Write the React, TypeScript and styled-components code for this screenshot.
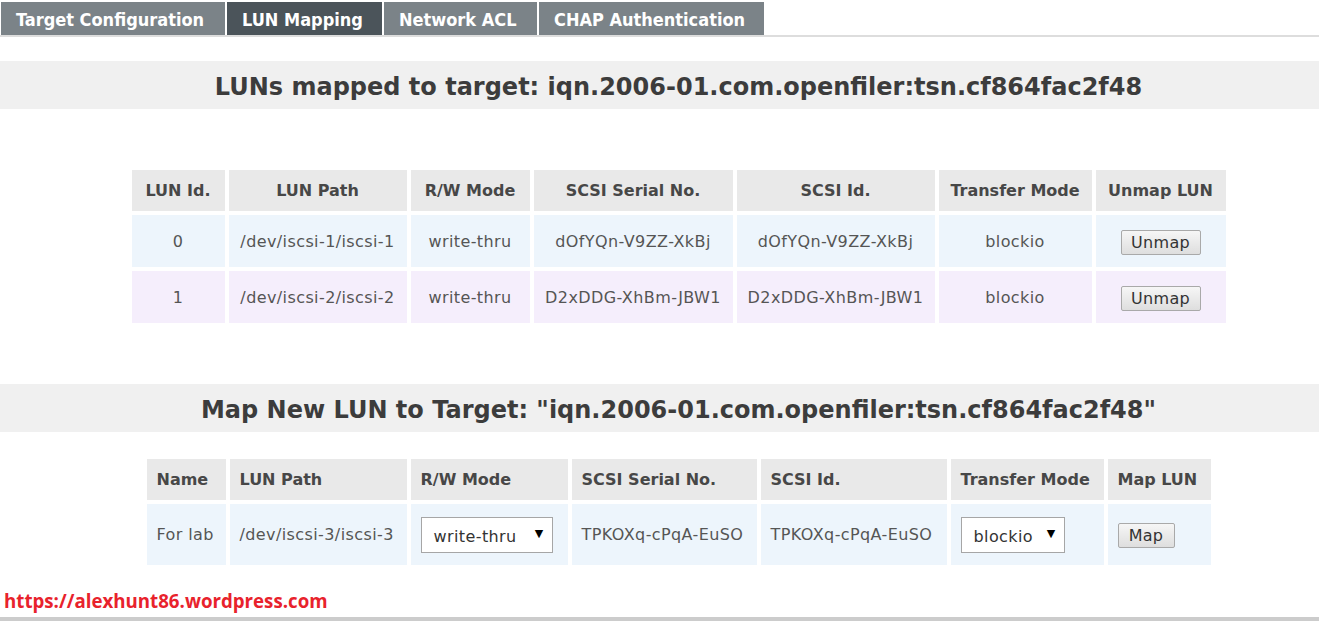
import React from 'react'
import styled, { createGlobalStyle } from 'styled-components'

const GlobalStyle = createGlobalStyle`
	html, body {
		margin: 0;
		padding: 0;
		background: #ffffff;
		font-family: 'DejaVu Sans', Verdana, sans-serif;
	}
`

const Page = styled.div`
	width: 1319px;
	height: 621px;
	overflow: hidden;
	display: flex;
	flex-direction: column;
`

const TabBar = styled.nav`
	display: flex;
	gap: 2px;
	padding: 2px 0 0 1px;
	border-bottom: 2px solid #dddddd;
`

const Tab = styled.a<{ $active?: boolean; $w: number }>`
	display: flex;
	align-items: center;
	box-sizing: border-box;
	width: ${({ $w }) => $w}px;
	height: 33px;
	padding: 1px 0 0 15px;
	background: ${({ $active }) => ($active ? '#4b545a' : '#7b8388')};
	color: #ffffff;
	font-family: 'DejaVu Sans Condensed', 'DejaVu Sans', sans-serif;
	font-weight: bold;
	font-size: 18px;
	text-decoration: none;
	white-space: nowrap;
`

const HeadingBar = styled.h2<{ $top: number }>`
	margin: ${({ $top }) => $top}px 0 0;
	height: 48px;
	box-sizing: border-box;
	padding: 4px 0 0 38px;
	display: flex;
	align-items: center;
	justify-content: center;
	background: #f0f0f0;
	color: #3c3c3c;
	font-family: 'DejaVu Sans', Verdana, sans-serif;
	font-weight: bold;
	font-size: 24px;
`

const TableWrap = styled.div<{ $top: number }>`
	margin-top: ${({ $top }) => $top}px;
	padding-left: 38px;
	display: flex;
	justify-content: center;
`

const Table = styled.table`
	border-collapse: separate;
	border-spacing: 4px;
	margin: -4px;
	font-family: 'DejaVu Sans', Tahoma, sans-serif;
	font-size: 16px;
	color: #555555;
`

const Th = styled.th<{ $w: number; $left?: boolean }>`
	width: ${({ $w }) => $w}px;
	height: 41px;
	box-sizing: border-box;
	padding: 0 10px;
	background: #e9e9e9;
	color: #474747;
	font-weight: bold;
	text-align: ${({ $left }) => ($left ? 'left' : 'center')};
	white-space: nowrap;
`

const Td = styled.td<{ $bg: string; $h: number; $left?: boolean }>`
	height: ${({ $h }) => $h}px;
	box-sizing: border-box;
	padding: 0 10px;
	background: ${({ $bg }) => $bg};
	text-align: ${({ $left }) => ($left ? 'left' : 'center')};
	letter-spacing: 0.4px;
	white-space: nowrap;
`

const Button = styled.button<{ $w: number }>`
	width: ${({ $w }) => $w}px;
	height: 25px;
	padding: 0;
	margin-top: 2px;
	border: 1px solid #a9a9a9;
	border-radius: 2px;
	background: linear-gradient(#f6f6f6, #dedede);
	color: #333333;
	font-family: 'DejaVu Sans', Tahoma, sans-serif;
	font-size: 16px;
	letter-spacing: 0.3px;
	cursor: pointer;
`

const SelectBox = styled.div<{ $w: number }>`
	width: ${({ $w }) => $w}px;
	height: 36px;
	box-sizing: border-box;
	display: flex;
	align-items: center;
	justify-content: space-between;
	padding: 3px 8px 0 12px;
	border: 1px solid #a6a6a6;
	background: #ffffff;
	color: #333333;
	font-size: 16px;
`

const Arrow = styled.span`
	font-size: 11px;
	color: #000000;
	margin-top: -6px;
`

const Footer = styled.footer`
	margin-top: auto;
	display: flex;
	flex-direction: column;
`

const Credit = styled.a`
	padding: 0 0 4px 4px;
	color: #e8222c;
	font-family: 'Open Sans', sans-serif;
	font-weight: bold;
	font-size: 18.7px;
	text-decoration: none;
`

const BottomRule = styled.div`
	height: 4px;
	background: #cccccc;
`

const target = 'iqn.2006-01.com.openfiler:tsn.cf864fac2f48'

const mapped = [
	{ id: '0', path: '/dev/iscsi-1/iscsi-1', mode: 'write-thru', serial: 'dOfYQn-V9ZZ-XkBj', bg: '#edf5fc' },
	{ id: '1', path: '/dev/iscsi-2/iscsi-2', mode: 'write-thru', serial: 'D2xDDG-XhBm-JBW1', bg: '#f5eefc' }
]

const mappedCols: [string, number][] = [
	['LUN Id.', 93],
	['LUN Path', 178],
	['R/W Mode', 119],
	['SCSI Serial No.', 199],
	['SCSI Id.', 198],
	['Transfer Mode', 153],
	['Unmap LUN', 130]
]

const newCols: [string, number][] = [
	['Name', 79],
	['LUN Path', 177],
	['R/W Mode', 157],
	['SCSI Serial No.', 185],
	['SCSI Id.', 186],
	['Transfer Mode', 153],
	['Map LUN', 103]
]

const tabs: [string, number][] = [
	['Target Configuration', 224],
	['LUN Mapping', 155],
	['Network ACL', 153],
	['CHAP Authentication', 225]
]

export default function App() {
	return (
		<Page>
			<GlobalStyle />
			<TabBar>
				{tabs.map(([label, w]) => (
					<Tab key={label} $w={w} $active={label === 'LUN Mapping'}>
						{label}
					</Tab>
				))}
			</TabBar>

			<HeadingBar $top={24}>LUNs mapped to target: {target}</HeadingBar>
			<TableWrap $top={61}>
				<Table>
					<thead>
						<tr>
							{mappedCols.map(([label, w]) => (
								<Th key={label} $w={w}>{label}</Th>
							))}
						</tr>
					</thead>
					<tbody>
						{mapped.map((row) => (
							<tr key={row.id}>
								<Td $bg={row.bg} $h={52}>{row.id}</Td>
								<Td $bg={row.bg} $h={52}>{row.path}</Td>
								<Td $bg={row.bg} $h={52}>{row.mode}</Td>
								<Td $bg={row.bg} $h={52}>{row.serial}</Td>
								<Td $bg={row.bg} $h={52}>{row.serial}</Td>
								<Td $bg={row.bg} $h={52}>blockio</Td>
								<Td $bg={row.bg} $h={52}>
									<Button $w={80}>Unmap</Button>
								</Td>
							</tr>
						))}
					</tbody>
				</Table>
			</TableWrap>

			<HeadingBar $top={61}>Map New LUN to Target: "{target}"</HeadingBar>
			<TableWrap $top={27}>
				<Table>
					<thead>
						<tr>
							{newCols.map(([label, w]) => (
								<Th key={label} $w={w} $left>{label}</Th>
							))}
						</tr>
					</thead>
					<tbody>
						<tr>
							<Td $bg="#edf5fc" $h={61} $left>For lab</Td>
							<Td $bg="#edf5fc" $h={61} $left>/dev/iscsi-3/iscsi-3</Td>
							<Td $bg="#edf5fc" $h={61} $left>
								<SelectBox $w={132}>
									write-thru <Arrow>▼</Arrow>
								</SelectBox>
							</Td>
							<Td $bg="#edf5fc" $h={61} $left>TPKOXq-cPqA-EuSO</Td>
							<Td $bg="#edf5fc" $h={61} $left>TPKOXq-cPqA-EuSO</Td>
							<Td $bg="#edf5fc" $h={61} $left>
								<SelectBox $w={104}>
									blockio <Arrow>▼</Arrow>
								</SelectBox>
							</Td>
							<Td $bg="#edf5fc" $h={61} $left>
								<Button $w={57}>Map</Button>
							</Td>
						</tr>
					</tbody>
				</Table>
			</TableWrap>

			<Footer>
				<Credit href="#">https://alexhunt86.wordpress.com</Credit>
				<BottomRule />
			</Footer>
		</Page>
	)
}
